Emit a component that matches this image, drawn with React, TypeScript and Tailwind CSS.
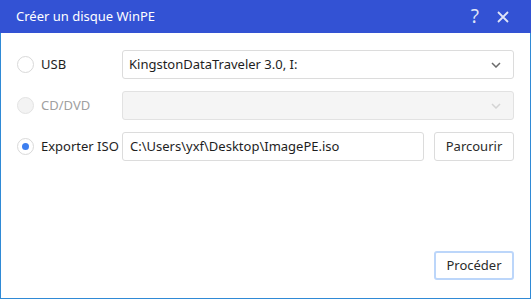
import React from 'react';

function Radio({ checked, disabled }: { checked?: boolean; disabled?: boolean }) {
  return (
    <span
      className={`flex h-[17px] w-[17px] shrink-0 items-center justify-center rounded-full border ${
        disabled ? 'border-[#e3e3e3] bg-[#f3f3f3]' : 'border-[#d9d9d9] bg-white'
      }`}
    >
      {checked && <span className="h-[7px] w-[7px] rounded-full bg-[#3d7ff0]" />}
    </span>
  );
}

function Chevron({ light }: { light?: boolean }) {
  return (
    <svg width="10" height="6" viewBox="0 0 10 6" className="shrink-0">
      <path d="M1 1l4 4 4-4" fill="none" stroke={light ? '#d4d4d4' : '#6b6b6b'} strokeWidth="1.5" />
    </svg>
  );
}

export default function App() {
  return (
    <div
      className="flex h-[299px] w-[532px] flex-col whitespace-nowrap bg-white text-[13px] text-[#1e1e1e]"
      style={{ fontFamily: '"Noto Sans", "Open Sans", sans-serif' }}
    >
      <div className="flex h-[33px] w-[531px] shrink-0 items-center bg-[#3352d4] pl-[16px] pr-[22px] text-white">
        <span className="flex-1 text-[13px]">Créer un disque WinPE</span>
        <span className="mr-[18px] text-[19px] leading-none text-[#dfe4f7]">?</span>
        <svg width="12" height="12" viewBox="0 0 12 12">
          <path d="M1 1l10 10M11 1L1 11" stroke="#dfe4f7" strokeWidth="1.8" />
        </svg>
      </div>
      <div className="flex w-[531px] flex-1 flex-col border-x border-b border-[#2f8ad6] pl-[16px] pr-[16px] pt-[17px] pb-[18px]">
        <div className="flex h-[29px] items-center">
          <div className="flex w-[105px] items-center gap-[7px]">
            <Radio />
            <span>USB</span>
          </div>
          <div className="flex h-[29px] flex-1 items-center justify-between rounded-[3px] border border-[#dcdcdc] pl-[6px] pr-[12px]">
            <span>KingstonDataTraveler 3.0, I:</span>
            <Chevron />
          </div>
        </div>
        <div className="mt-[12px] flex h-[29px] items-center">
          <div className="flex w-[105px] items-center gap-[7px]">
            <Radio disabled />
            <span className="text-[#a0a0a0]">CD/DVD</span>
          </div>
          <div className="flex h-[29px] flex-1 items-center justify-end rounded-[3px] border border-[#e2e2e2] bg-[#f5f5f5] pr-[12px]">
            <Chevron light />
          </div>
        </div>
        <div className="mt-[12px] flex h-[29px] items-center">
          <div className="flex w-[105px] items-center gap-[7px]">
            <Radio checked />
            <span>Exporter ISO</span>
          </div>
          <div className="flex h-[29px] w-[302px] items-center rounded-[3px] border border-[#dcdcdc] pl-[7px]">
            <span>C:\Users\yxf\Desktop\ImagePE.iso</span>
          </div>
          <div className="ml-[10px] flex h-[29px] flex-1 items-center justify-center rounded-[3px] border border-[#dcdcdc] text-[#2b2b2b]">
            Parcourir
          </div>
        </div>
        <div className="mt-auto flex justify-end">
          <div className="flex h-[29px] w-[80px] items-center justify-center rounded-[3px] border-2 border-[#bcd6fa] text-[#2b2b2b]">
            Procéder
          </div>
        </div>
      </div>
    </div>
  );
}
